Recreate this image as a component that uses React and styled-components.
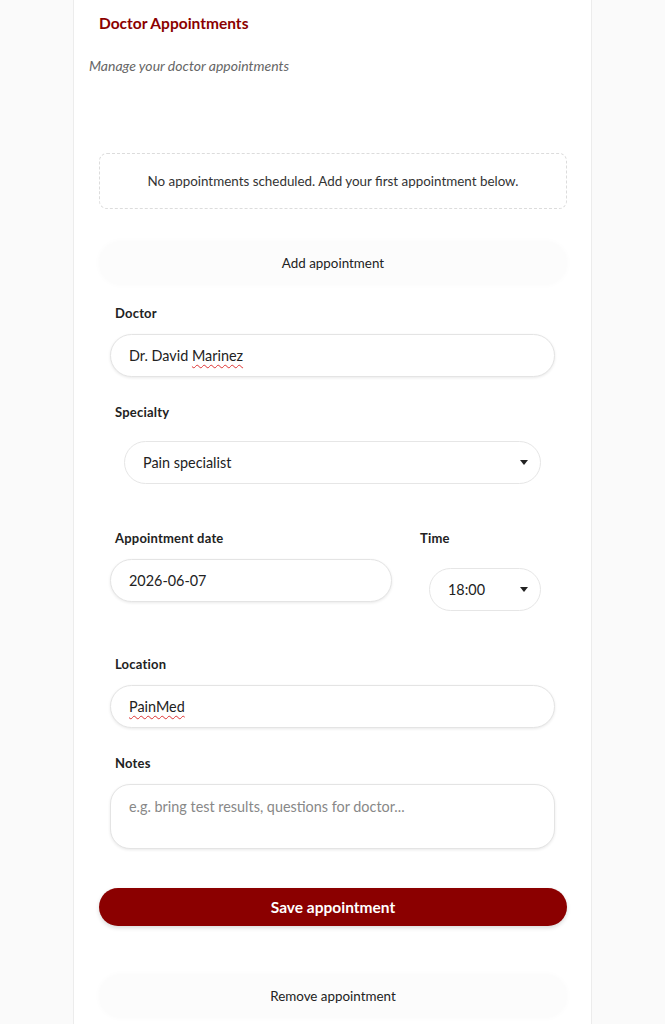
import React, { useState } from "react";
import styled, { createGlobalStyle } from "styled-components";

const GlobalStyle = createGlobalStyle`
  html, body {
    margin: 0;
    padding: 0;
    background: #fafafa;
    font-family: Lato, "Liberation Sans", sans-serif;
    color: #222;
  }
`;

const Page = styled.div`
  min-height: 1024px;
  background: #fafafa;
`;

const Card = styled.div`
  width: 519px;
  margin: 0 auto;
  min-height: 1024px;
  box-sizing: border-box;
  background: #fff;
  border-left: 1px solid #ececec;
  border-right: 1px solid #ececec;
  padding: 14px 24px 0 25px;
`;

const Title = styled.h2`
  margin: 0;
  font-size: 15.5px;
  font-weight: 700;
  color: #8b0000;
  line-height: 18px;
`;

const Subtitle = styled.p`
  margin: 26px 0 0 -10px;
  font-size: 14px;
  font-style: italic;
  color: #666;
  line-height: 16px;
`;

const EmptyBox = styled.div`
  margin-top: 79px;
  height: 56px;
  box-sizing: border-box;
  border: 1px dashed #dcdcdc;
  border-radius: 8px;
  display: flex;
  align-items: center;
  justify-content: center;
  font-size: 13.4px;
  color: #333;
`;

const GhostButton = styled.button`
  display: block;
  width: 100%;
  height: 44px;
  margin-top: ${p => p.$mt}px;
  border: none;
  border-radius: 22px;
  background: #fcfcfc;
  box-shadow: 0 0 6px rgba(0, 0, 0, 0.025);
  font-family: inherit;
  font-size: 13.4px;
  color: #222;
  cursor: pointer;
`;

const Form = styled.div`
  padding: 0 12px 0 11px;
`;

const Field = styled.div`
  margin-top: ${p => p.$mt}px;
  display: flex;
  flex-direction: column;
`;

const Label = styled.label`
  padding-left: ${p => p.$pl ?? 5}px;
  font-size: 13px;
  font-weight: 700;
  letter-spacing: 0.2px;
  color: #222;
  line-height: 15px;
  margin-bottom: 13px;
`;

const inputBase = `
  box-sizing: border-box;
  width: 100%;
  border: 1px solid #e4e4e4;
  background: #fff;
  box-shadow: 0 1px 3px rgba(0, 0, 0, 0.09);
  font-family: Lato, "Liberation Sans", sans-serif;
  font-size: 14.4px;
  color: #222;
  outline: none;
`;

const TextInput = styled.input`
  ${inputBase}
  height: 43px;
  border-radius: 22px;
  padding: 0 18px;
`;

const Spell = styled.span`
  text-decoration: underline wavy #d33;
  text-decoration-thickness: 1px;
  text-underline-offset: 3px;
`;

const FakeInput = styled.div`
  ${inputBase}
  height: 43px;
  border-radius: 22px;
  padding: 0 18px;
  display: flex;
  align-items: center;
`;

const SelectWrap = styled.div`
  padding: 0 ${p => p.$pr}px 0 ${p => p.$pl}px;
  margin-top: ${p => p.$mt || 0}px;
`;

const SelectBox = styled.div`
  ${inputBase}
  height: 43px;
  border-radius: 22px;
  padding: 0 12px 0 18px;
  display: flex;
  align-items: center;
  justify-content: space-between;
  box-shadow: none;
  border-color: #e6e6e6;
`;

const Caret = styled.span`
  width: 0;
  height: 0;
  border-left: 4px solid transparent;
  border-right: 4px solid transparent;
  border-top: 5px solid #222;
`;

const Row = styled.div`
  margin-top: ${p => p.$mt}px;
  display: flex;
  gap: 28px;
`;

const Col = styled.div`
  display: flex;
  flex-direction: column;
  width: ${p => (p.$w ? `${p.$w}px` : "auto")};
  flex: ${p => (p.$w ? "none" : 1)};
`;

const TextArea = styled.textarea`
  ${inputBase}
  height: 65px;
  border-radius: 20px;
  padding: 13px 18px;
  resize: none;
  &::placeholder {
    color: #888;
  }
`;

const SaveButton = styled.button`
  display: block;
  width: 100%;
  height: 38px;
  margin-top: 39px;
  border: none;
  border-radius: 19px;
  background: #8b0000;
  color: #fff;
  font-family: inherit;
  font-size: 15.5px;
  font-weight: 700;
  box-shadow: 0 2px 4px rgba(0, 0, 0, 0.15);
  cursor: pointer;
`;

export default function App() {
  const [notes, setNotes] = useState("");

  return (
    <Page>
      <GlobalStyle />
      <Card>
        <Title>Doctor Appointments</Title>
        <Subtitle>Manage your doctor appointments</Subtitle>

        <EmptyBox>No appointments scheduled. Add your first appointment below.</EmptyBox>

        <GhostButton $mt={32}>Add appointment</GhostButton>

        <Form>
          <Field $mt={21}>
            <Label>Doctor</Label>
            <FakeInput>
              Dr. David&nbsp;<Spell>Marinez</Spell>
            </FakeInput>
          </Field>

          <Field $mt={28}>
            <Label>Specialty</Label>
            <SelectWrap $pl={14} $pr={14} $mt={8}>
              <SelectBox>
                <span>Pain specialist</span>
                <Caret />
              </SelectBox>
            </SelectWrap>
          </Field>

          <Row $mt={47}>
            <Col $w={282}>
              <Label>Appointment date</Label>
              <TextInput defaultValue="2026-06-07" />
            </Col>
            <Col>
              <Label $pl={0}>Time</Label>
              <SelectWrap $pl={9} $pr={14} $mt={9}>
                <SelectBox>
                  <span>18:00</span>
                  <Caret />
                </SelectBox>
              </SelectWrap>
            </Col>
          </Row>

          <Field $mt={46}>
            <Label>Location</Label>
            <FakeInput>
              <Spell>PainMed</Spell>
            </FakeInput>
          </Field>

          <Field $mt={28}>
            <Label>Notes</Label>
            <TextArea
              value={notes}
              onChange={e => setNotes(e.target.value)}
              placeholder="e.g. bring test results, questions for doctor..."
            />
          </Field>
        </Form>

        <SaveButton>Save appointment</SaveButton>

        <GhostButton $mt={48}>Remove appointment</GhostButton>
      </Card>
    </Page>
  );
}
